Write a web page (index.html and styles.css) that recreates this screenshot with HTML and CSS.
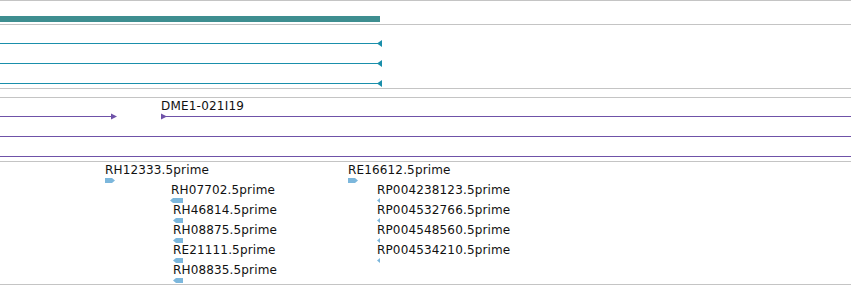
FILE: index.html
```html
<!DOCTYPE html>
<html lang="en">
<head>
  <meta charset="UTF-8">
  <title>Tracks</title>
  <link rel="stylesheet" href="styles.css">
</head>
<body>
  <div class="rule"></div>

  <div class="track track-bar">
    <div class="bar"></div>
  </div>
  <div class="rule"></div>

  <div class="track track-lines">
    <svg width="851" height="63" class="lines-blue">
      <line x1="0" y1="18.5" x2="380" y2="18.5"/>
      <polygon points="377,18.5 382,15 382,22"/>
      <line x1="0" y1="38.5" x2="380" y2="38.5"/>
      <polygon points="377,38.5 382,35 382,42"/>
      <line x1="0" y1="58.5" x2="380" y2="58.5"/>
      <polygon points="377,58.5 382,55 382,62"/>
    </svg>
  </div>
  <div class="rule"></div>
  <div class="gap"></div>
  <div class="rule"></div>

  <div class="track track-lines">
    <span class="clone-label">DME1-021I19</span>
    <svg width="851" height="63" class="lines-purple">
      <line x1="0" y1="18.5" x2="112" y2="18.5"/>
      <polygon points="111,15.5 117,18.5 111,21.5"/>
      <line x1="162" y1="18.5" x2="851" y2="18.5"/>
      <polygon points="161,15.5 167,18.5 161,21.5"/>
      <line x1="0" y1="38.5" x2="851" y2="38.5"/>
      <line x1="0" y1="58.5" x2="851" y2="58.5"/>
    </svg>
  </div>
  <div class="rule"></div>

  <div class="track track-reads">
    <div class="read" style="left:105px; top:1px;">
      <span>RH12333.5prime</span>
      <svg width="10" height="5"><polygon points="0,0 7,0 10,2.5 7,5 0,5"/></svg>
    </div>
    <div class="read" style="left:171px; top:21px;">
      <span>RH07702.5prime</span>
      <svg width="13" height="5" style="margin-left:-1px"><polygon points="0,2.5 3,0 13,0 13,5 3,5"/></svg>
    </div>
    <div class="read" style="left:173px; top:41px;">
      <span>RH46814.5prime</span>
      <svg width="10" height="5"><polygon points="0,2.5 3,0 10,0 10,5 3,5"/></svg>
    </div>
    <div class="read" style="left:173px; top:61px;">
      <span>RH08875.5prime</span>
      <svg width="10" height="5"><polygon points="0,2.5 3,0 10,0 10,5 3,5"/></svg>
    </div>
    <div class="read" style="left:173px; top:81px;">
      <span>RE21111.5prime</span>
      <svg width="10" height="5"><polygon points="0,2.5 3,0 10,0 10,5 3,5"/></svg>
    </div>
    <div class="read" style="left:173px; top:101px;">
      <span>RH08835.5prime</span>
      <svg width="10" height="5"><polygon points="0,2.5 3,0 10,0 10,5 3,5"/></svg>
    </div>

    <div class="read" style="left:348px; top:1px;">
      <span>RE16612.5prime</span>
      <svg width="10" height="5"><polygon points="0,0 7,0 10,2.5 7,5 0,5"/></svg>
    </div>
    <div class="read" style="left:377px; top:21px;">
      <span>RP004238123.5prime</span>
      <svg width="4" height="5"><polygon points="0,2.5 3,0 3,5"/></svg>
    </div>
    <div class="read" style="left:377px; top:41px;">
      <span>RP004532766.5prime</span>
      <svg width="4" height="5"><polygon points="0,2.5 3,0 3,5"/></svg>
    </div>
    <div class="read" style="left:377px; top:61px;">
      <span>RP004548560.5prime</span>
      <svg width="4" height="5"><polygon points="0,2.5 3,0 3,5"/></svg>
    </div>
    <div class="read" style="left:377px; top:81px;">
      <span>RP004534210.5prime</span>
      <svg width="4" height="5"><polygon points="0,2.5 3,0 3,5"/></svg>
    </div>
  </div>
  <div class="rule"></div>
</body>
</html>
```

FILE: styles.css
```css
body {
  margin: 0;
  width: 851px;
  background: #fff;
  font-family: "DejaVu Sans", Verdana, sans-serif;
  font-size: 12px;
  color: #111;
}
svg {
  display: block;
}
.rule {
  height: 1px;
  background: #c4c4c4;
}
.gap {
  height: 8px;
}
.track {
  position: relative;
}
.track-bar {
  height: 8px;
  padding-top: 15px;
}
.bar {
  width: 380px;
  height: 6px;
  background: #3e8e90;
}
.track-lines {
  height: 63px;
}
.lines-blue line {
  stroke: #1a8fab;
  stroke-width: 1;
}
.lines-blue polygon {
  fill: #1a8fab;
}
.lines-purple line {
  stroke: #6f52a8;
  stroke-width: 1;
}
.lines-purple polygon {
  fill: #6f52a8;
}
.clone-label {
  position: absolute;
  left: 161px;
  top: 1px;
  line-height: 14px;
  letter-spacing: 0.2px;
}
.track-reads {
  height: 122px;
}
.read {
  position: absolute;
  line-height: 14px;
  white-space: nowrap;
  letter-spacing: 0.15px;
}
.read span {
  display: block;
}
.read svg {
  margin-top: 1px;
}
.read polygon {
  fill: #7cb7dc;
}
```
